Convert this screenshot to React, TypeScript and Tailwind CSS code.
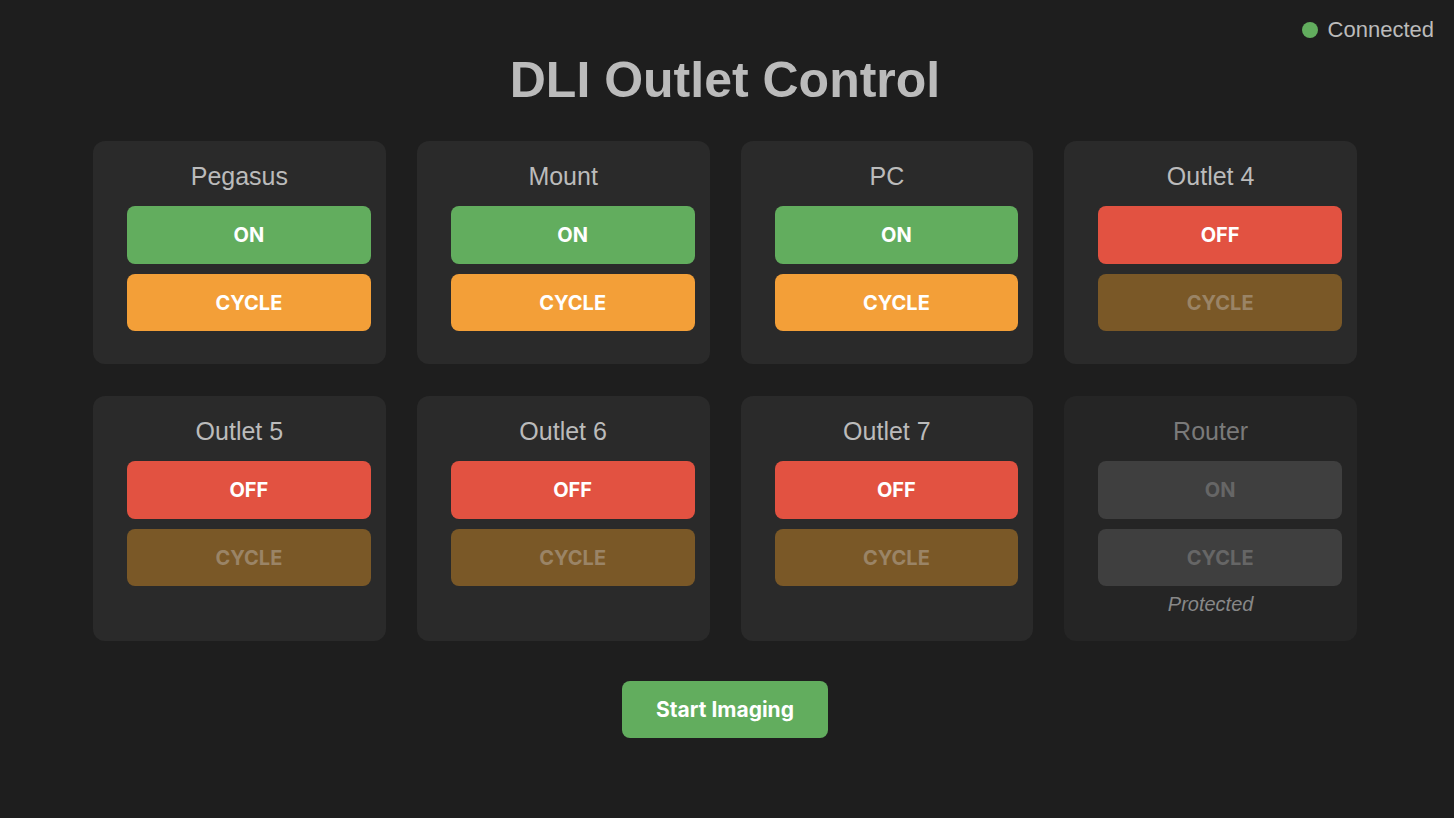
import React from "react";

type Outlet = {
  name: string;
  on: boolean;
  locked?: boolean;
};

const outlets: Outlet[] = [
  { name: "Pegasus", on: true },
  { name: "Mount", on: true },
  { name: "PC", on: true },
  { name: "Outlet 4", on: false },
  { name: "Outlet 5", on: false },
  { name: "Outlet 6", on: false },
  { name: "Outlet 7", on: false },
  { name: "Router", on: true, locked: true },
];

const btnFont = { fontFamily: "Inter, 'Noto Sans', sans-serif" };

function OutletCard({ outlet }: { outlet: Outlet }) {
  const { name, on, locked } = outlet;

  let powerCls = on ? "bg-[#62ad5e] text-white" : "bg-[#e25241] text-white";
  let cycleCls = on ? "bg-[#f39f38] text-white" : "bg-[#7a5827] text-[#9a8466]";
  if (locked) {
    powerCls = "bg-[#3f3f3f] text-[#666666]";
    cycleCls = "bg-[#3f3f3f] text-[#666666]";
  }

  return (
    <div
      className={
        "rounded-xl pt-[21px] pb-[33px] flex flex-col " +
        (locked ? "bg-[#252525]" : "bg-[#2a2a2a]")
      }
    >
      <h2
        className={
          "text-center text-[25px] leading-[28px] " +
          (locked ? "text-[#7a7a7a]" : "text-[#bbbbbb]")
        }
      >
        {name}
      </h2>
      <div className="pl-[34px] pr-[15px] mt-[16px] flex flex-col gap-[10px]">
        <button
          style={btnFont}
          className={"h-[58px] rounded-lg text-[20px] font-bold " + powerCls}
        >
          {on ? "ON" : "OFF"}
        </button>
        <button
          style={btnFont}
          className={"h-[57px] rounded-lg text-[20px] font-bold " + cycleCls}
        >
          CYCLE
        </button>
      </div>
      {locked && (
        <p className="text-center italic text-[20px] leading-[24px] text-[#888888] mt-[6px] -mb-[8px]">
          Protected
        </p>
      )}
    </div>
  );
}

export default function App() {
  return (
    <main
      className="relative min-h-screen w-full bg-[#1e1e1e]"
      style={{ fontFamily: "'Liberation Sans', Arial, sans-serif" }}
    >
      <div className="absolute top-[13px] right-[20px] flex items-center gap-[10px]">
        <span className="w-[16px] h-[16px] rounded-full bg-[#62ad5e]" />
        <span className="text-[22px] text-[#bbbbbb]">Connected</span>
      </div>

      <div className="flex flex-col items-center pt-[51px] pr-[4px]">
        <h1 className="text-[50px] font-bold leading-[58px] text-[#bbbbbb]">
          DLI Outlet Control
        </h1>

        <div className="grid grid-cols-4 gap-x-[31px] gap-y-[32px] w-[1264px] mt-[32px]">
          {outlets.map((o) => (
            <OutletCard key={o.name} outlet={o} />
          ))}
        </div>

        <button
          style={btnFont}
          className="mt-[40px] w-[206px] h-[57px] rounded-lg bg-[#62ad5e] text-white text-[21px] font-bold"
        >
          Start Imaging
        </button>
      </div>
    </main>
  );
}
